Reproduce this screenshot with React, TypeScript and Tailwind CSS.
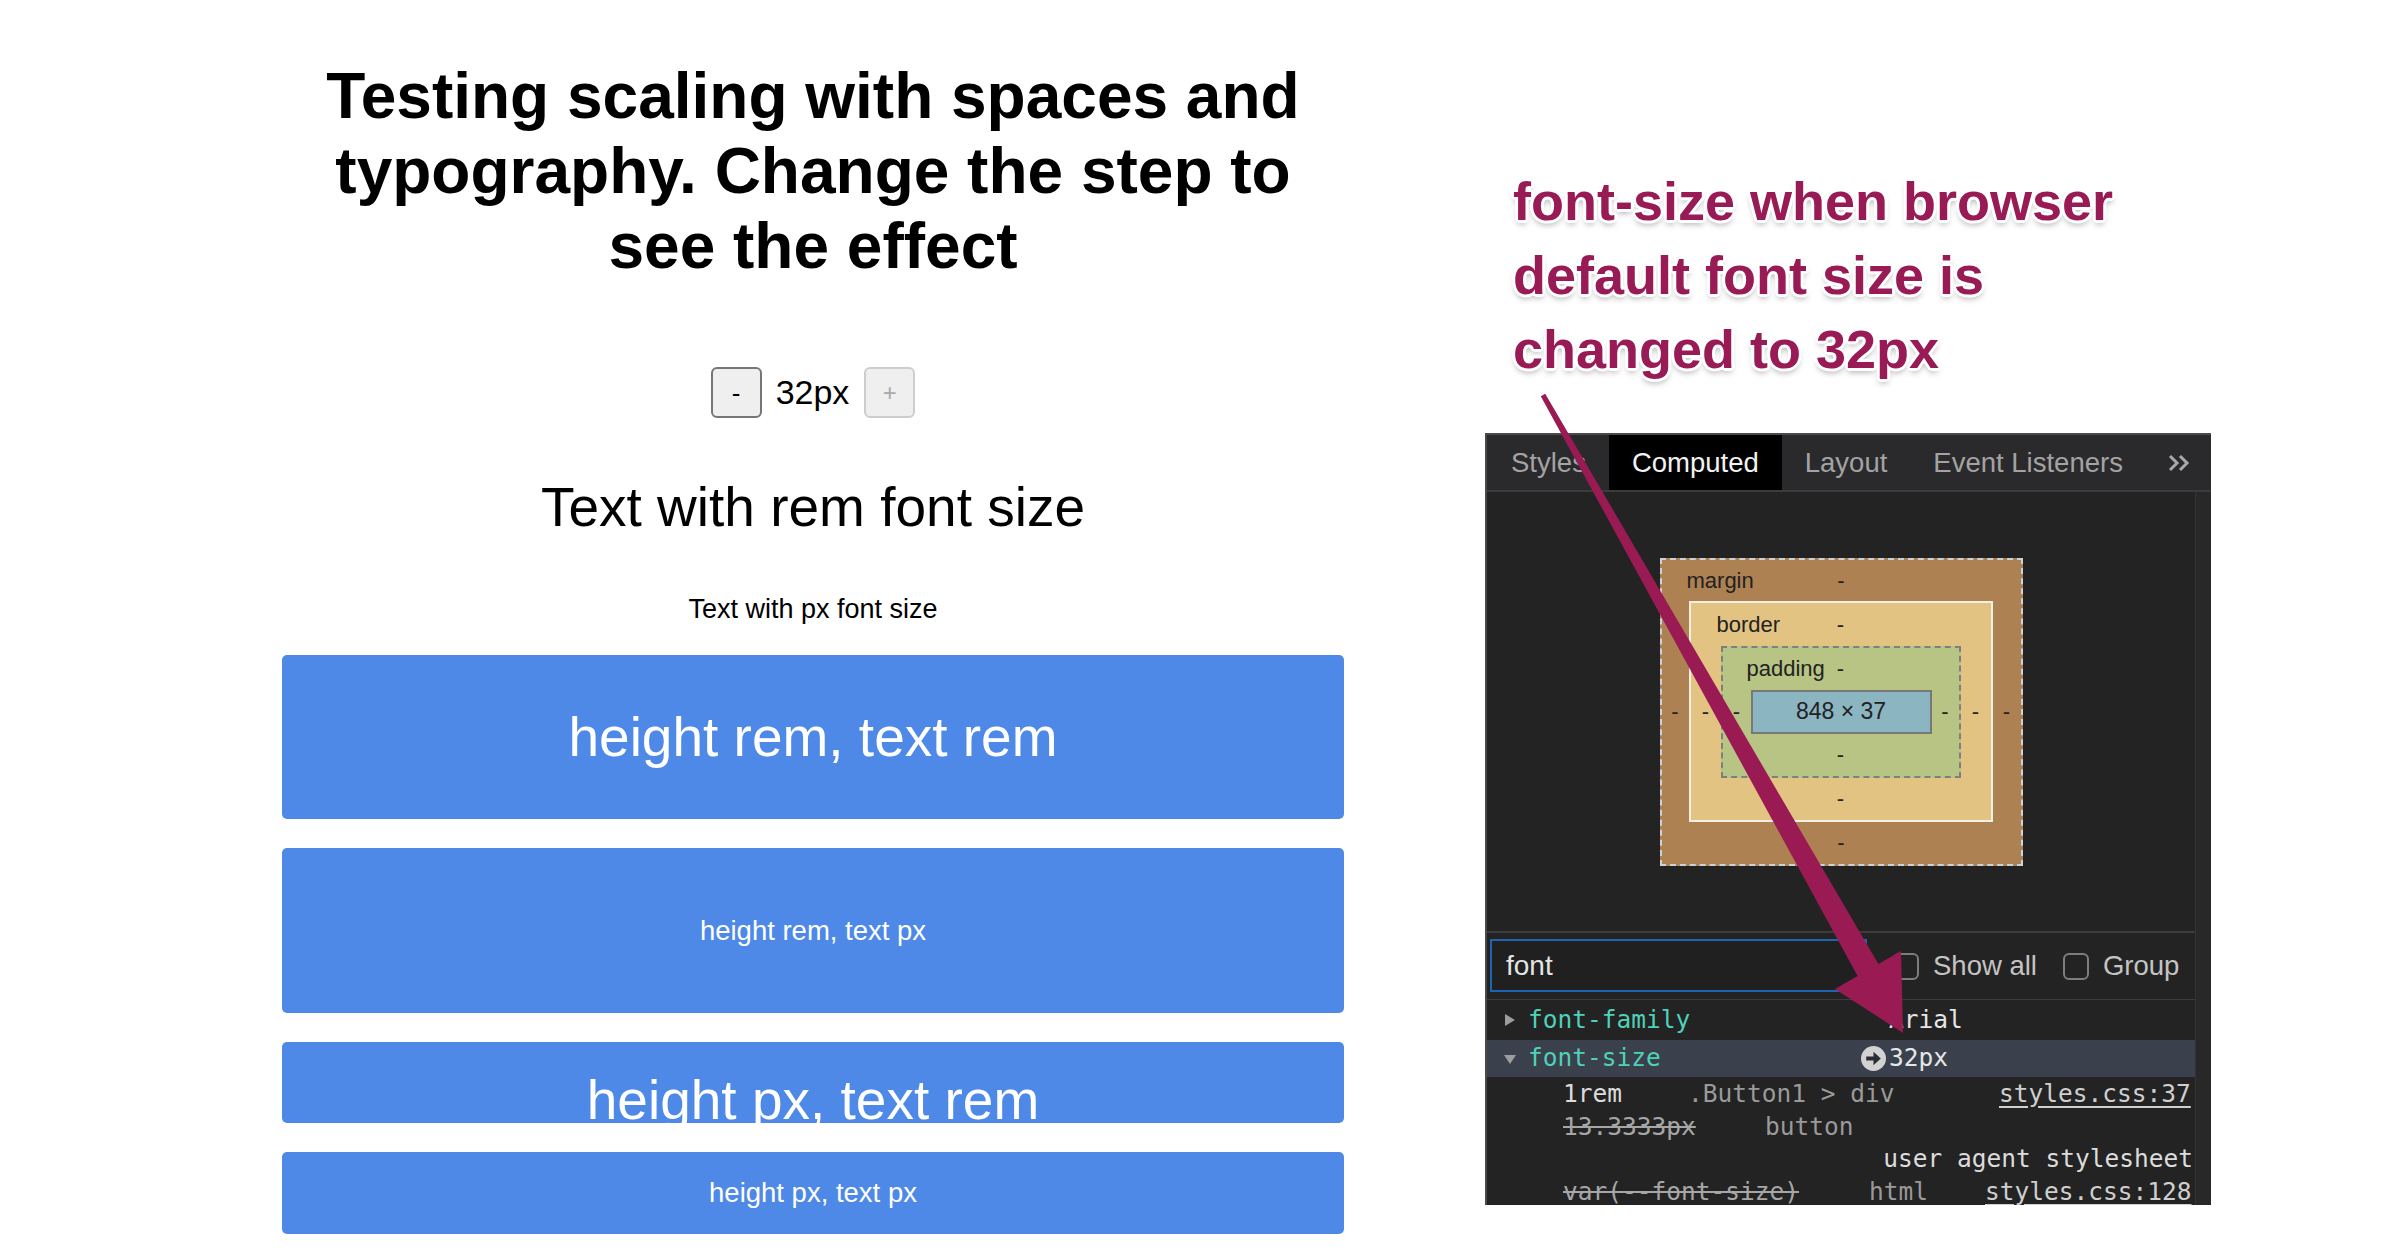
import React from 'react';

const sans = "font-['Liberation_Sans',Arial,sans-serif]";
const mono = "font-['DejaVu_Sans_Mono','Liberation_Mono',monospace]";

const DemoButton = ({ h, text, big, top }: { h: string; text: string; big?: boolean; top?: boolean }) => (
  <div
    className={`w-full ${h} rounded-[5px] bg-[#4e89e8] text-white flex justify-center overflow-hidden ${
      top ? 'items-start pt-[27px]' : 'items-center'
    }`}
  >
    <span className={big ? 'text-[55px] leading-[63px]' : 'text-[27.5px] leading-[32px]'}>{text}</span>
  </div>
);

const Tri = ({ down }: { down?: boolean }) => (
  <svg width="14" height="14" viewBox="0 0 14 14" className="shrink-0">
    {down ? <polygon points="1,3 13,3 7,12" fill="#9d9d9d" /> : <polygon points="2,1 12,7 2,13" fill="#9d9d9d" />}
  </svg>
);

const BoxModel = () => (
  <div className="w-[363px] h-[308px] bg-[#ae8152] border-2 border-dashed border-[#cad3dc] flex flex-col text-[22px] text-[#222]">
    <div className="h-[41px] grid grid-cols-[1fr_auto_1fr] items-center">
      <span className="pl-[25px]">margin</span>
      <span>-</span>
      <span />
    </div>
    <div className="flex items-center">
      <span className="w-[27px] text-center">-</span>
      <div className="w-[304px] h-[221px] bg-[#e3c381] border-2 border-[#f4f0e6] flex flex-col">
        <div className="h-[43px] grid grid-cols-[1fr_auto_1fr] items-center">
          <span className="pl-[26px]">border</span>
          <span>-</span>
          <span />
        </div>
        <div className="flex items-center">
          <span className="w-[30px] text-center">-</span>
          <div className="w-[240px] h-[132px] bg-[#b8c483] border-2 border-dashed border-[#7f7f7f] flex flex-col">
            <div className="h-[42px] grid grid-cols-[1fr_auto_1fr] items-center">
              <span className="pl-[24px]">padding</span>
              <span>-</span>
              <span />
            </div>
            <div className="flex items-center">
              <span className="w-[28px] text-center">-</span>
              <div className="w-[181px] h-[44px] bg-[#8cb5c2] border-2 border-[#787878] flex items-center justify-center text-[23px]">
                848 × 37
              </div>
              <span className="w-[27px] text-center">-</span>
            </div>
            <div className="h-[42px] flex items-center justify-center">-</div>
          </div>
          <span className="w-[30px] text-center">-</span>
        </div>
        <div className="h-[42px] flex items-center justify-center">-</div>
      </div>
      <span className="w-[28px] text-center">-</span>
    </div>
    <div className="h-[42px] flex items-center justify-center">-</div>
  </div>
);

const DevTools = () => (
  <div className={`w-[726px] h-[772px] mt-[47px] bg-[#232323] border-t-2 border-l-2 border-[#4a4a4a] flex flex-col overflow-hidden ${sans}`}>
    <div className="h-[57px] shrink-0 bg-[#2a2a2c] border-b-2 border-[#3b3b3b] flex items-stretch text-[27.5px] text-[#a3a3a3]">
      <div className="pl-[24px] pr-[23px] flex items-center">Styles</div>
      <div className="px-[23px] flex items-center bg-black text-[#f2f2f2]">Computed</div>
      <div className="px-[23px] flex items-center">Layout</div>
      <div className="px-[23px] flex items-center">Event Listeners</div>
      <div className="pl-[21px] flex items-center">
        <svg width="24" height="20" viewBox="0 0 24 20">
          <polyline points="3,3 10,10 3,17" fill="none" stroke="#a8a8a8" strokeWidth="3" />
          <polyline points="13,3 20,10 13,17" fill="none" stroke="#a8a8a8" strokeWidth="3" />
        </svg>
      </div>
    </div>
    <div className="flex-1 flex min-h-0">
      <div className="flex-1 flex flex-col min-w-0">
        <div className="h-[439px] shrink-0 flex items-center justify-center">
          <BoxModel />
        </div>
        <div className="h-[69px] shrink-0 border-t-2 border-b border-[#3c3c3c] flex items-start">
          <div className="ml-[3px] mt-[6px] w-[377px] h-[53px] border-2 border-[#1d65b3] bg-[#202020] flex items-center pl-[14px] text-[28px] text-[#e4e4e4]">
            font
          </div>
          <div className="ml-[26px] mt-[2px] h-[62px] flex items-center text-[27.5px] text-[#c4c4c4]">
            <span className="w-[26px] h-[27px] rounded-[6px] border-2 border-[#7d7d7d]" />
            <span className="ml-[14px]">Show all</span>
            <span className="ml-[26px] w-[26px] h-[27px] rounded-[6px] border-2 border-[#7d7d7d]" />
            <span className="ml-[14px]">Group</span>
          </div>
        </div>
        <div className={`${mono} text-[24.5px] whitespace-nowrap`}>
          <div className="h-[40px] flex items-center pl-[16px]">
            <Tri />
            <span className="ml-[11px] w-[361px] text-[#4fd1b8]">font-family</span>
            <span className="text-[#e6e6e6]">Arial</span>
          </div>
          <div className="h-[37px] flex items-center pl-[16px] bg-[#3a414d]">
            <Tri down />
            <span className="ml-[11px] w-[333px] text-[#4fd1b8]">font-size</span>
            <svg width="25" height="25" viewBox="0 0 24 24" className="shrink-0">
              <circle cx="12" cy="12" r="12" fill="#d2d2d2" />
              <path d="M5 10h7V5.5L19 12l-7 6.5V14H5z" fill="#2a2d33" />
            </svg>
            <span className="ml-[3px] text-[#e6e6e6]">32px</span>
          </div>
          <div className="h-[34px] flex items-center pl-[76px]">
            <span className="w-[125px] text-[#dcdcdc]">1rem</span>
            <span className="w-[311px] text-[#9a9a9a]">.Button1 &gt; div</span>
            <span className="text-[#cfcfcf] underline underline-offset-4">styles.css:37</span>
          </div>
          <div className="h-[32px] flex items-center pl-[76px]">
            <span className="w-[202px] text-[#a6a6a6] line-through">13.3333px</span>
            <span className="text-[#9a9a9a]">button</span>
          </div>
          <div className="h-[32px] flex items-center justify-end pr-[2px]">
            <span className="text-[#dcdcdc]">user agent stylesheet</span>
          </div>
          <div className="h-[34px] flex items-center pl-[76px]">
            <span className="w-[306px] text-[#a6a6a6] line-through">var(--font-size)</span>
            <span className="w-[116px] text-[#9a9a9a]">html</span>
            <span className="text-[#cfcfcf] underline underline-offset-4">styles.css:128</span>
          </div>
        </div>
      </div>
      <div className="w-[16px] shrink-0 bg-[#282828] border-l border-[#333]" />
    </div>
  </div>
);

export default function App() {
  return (
    <div className={`relative w-[2400px] h-[1256px] bg-white overflow-hidden flex ${sans}`}>
      <div className="ml-[282px] w-[1062px] shrink-0 flex flex-col items-center pt-[59px] text-black">
        <h1 className="text-[64px] leading-[75px] font-bold text-center">
          Testing scaling with spaces and
          <br />
          typography. Change the step to
          <br />
          see the effect
        </h1>
        <div className="mt-[83px] h-[51px] flex items-center">
          <button className="w-[51px] h-[51px] rounded-[6px] border-2 border-[#767676] bg-[#efefef] text-[26px] leading-none text-black flex items-center justify-center">
            -
          </button>
          <span className="ml-[14px] mr-[15px] text-[34px] leading-[51px]">32px</span>
          <button
            disabled
            className="w-[51px] h-[51px] rounded-[6px] border-2 border-[#cdcdcd] bg-[#efefef] text-[24px] leading-none text-[#a9a9a9] flex items-center justify-center"
          >
            +
          </button>
        </div>
        <p className="mt-[58px] text-[55px] leading-[63px]">Text with rem font size</p>
        <p className="mt-[55px] text-[27px] leading-[31px]">Text with px font size</p>
        <div className="mt-[30px] w-full flex flex-col gap-[29px]">
          <DemoButton h="h-[164px]" text="height rem, text rem" big />
          <DemoButton h="h-[165px]" text="height rem, text px" />
          <DemoButton h="h-[81px]" text="height px, text rem" big top />
          <DemoButton h="h-[82px]" text="height px, text px" />
        </div>
      </div>

      <div className="ml-[141px] w-[726px] shrink-0 flex flex-col">
        <p className="pt-[164px] pl-[28px] text-[54px] leading-[74px] font-bold text-[#991b55] [text-shadow:3px_0_0_#fff,-3px_0_0_#fff,0_3px_0_#fff,0_-3px_0_#fff,2px_2px_0_#fff,-2px_-2px_0_#fff,2px_-2px_0_#fff,-2px_2px_0_#fff,0_4px_6px_rgba(0,0,0,0.35)]">
          font-size when browser
          <br />
          default font size is
          <br />
          changed to 32px
        </p>
        <DevTools />
      </div>

      <svg className="absolute left-0 top-0 pointer-events-none" width="2400" height="1256" viewBox="0 0 2400 1256">
        <polygon
          points="1540.8,396.2 1545.2,393.8 1878.4,964.1 1901,951 1903,1033 1835,989 1857.6,975.9"
          fill="#9a1a54"
        />
      </svg>
    </div>
  );
}
